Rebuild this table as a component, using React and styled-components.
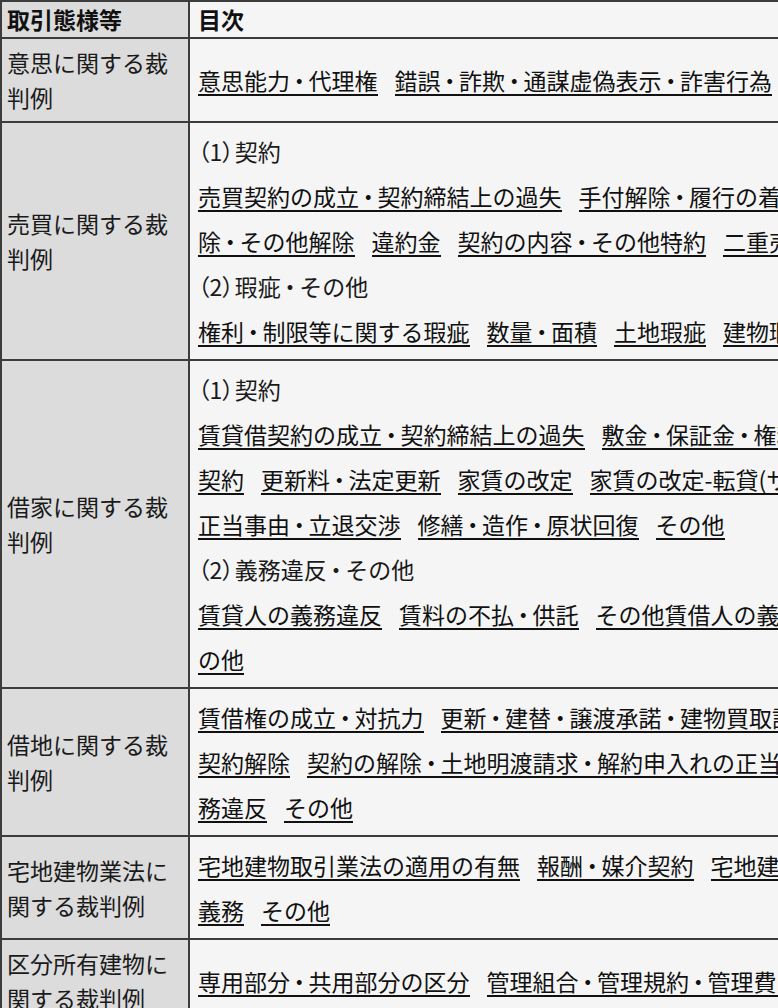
import React from "react";
import styled, { createGlobalStyle } from "styled-components";

const GlobalStyle = createGlobalStyle`
  html, body {
    margin: 0;
    padding: 0;
    overflow: hidden;
    background: #f5f5f5;
  }
  body {
    font-family: "Noto Sans CJK JP", "Noto Sans", sans-serif;
    color: #1a1a1a;
  }
`;

const ROWS = [
  {
    label: ["意思に関する裁", "判例"],
    lines: [{ links: ["意思能力・代理権", "錯誤・詐欺・通謀虚偽表示・詐害行為"] }],
  },
  {
    label: ["売買に関する裁", "判例"],
    lines: [
      { num: "（1）", heading: "契約" },
      { links: ["売買契約の成立・契約締結上の過失", "手付解除・履行の着手・債務不履行解"] },
      { links: ["除・その他解除", "違約金", "契約の内容・その他特約", "二重売買・他人物売買"] },
      { num: "（2）", heading: "瑕疵・その他" },
      { links: ["権利・制限等に関する瑕疵", "数量・面積", "土地瑕疵", "建物瑕疵", "その他"] },
    ],
  },
  {
    label: ["借家に関する裁", "判例"],
    lines: [
      { num: "（1）", heading: "契約" },
      { links: ["賃貸借契約の成立・契約締結上の過失", "敷金・保証金・権利金・定期借家"] },
      { links: ["契約", "更新料・法定更新", "家賃の改定", "家賃の改定-転貸(サブリース)", "解約申入れ"] },
      { links: ["正当事由・立退交渉", "修繕・造作・原状回復", "その他"] },
      { num: "（2）", heading: "義務違反・その他" },
      { links: ["賃貸人の義務違反", "賃料の不払・供託", "その他賃借人の義務違反・倒産・そ"] },
      { links: ["の他"] },
    ],
  },
  {
    label: ["借地に関する裁", "判例"],
    lines: [
      { links: ["賃借権の成立・対抗力", "更新・建替・譲渡承諾・建物買取請求権", "地代"] },
      { links: ["契約解除", "契約の解除・土地明渡請求・解約申入れの正当事由・賃借人の義"] },
      { links: ["務違反", "その他"] },
    ],
  },
  {
    label: ["宅地建物業法に", "関する裁判例"],
    lines: [
      { links: ["宅地建物取引業法の適用の有無", "報酬・媒介契約", "宅地建物取引業者の調査・説明"] },
      { links: ["義務", "その他"] },
    ],
  },
  {
    label: ["区分所有建物に", "関する裁判例"],
    lines: [{ links: ["専用部分・共用部分の区分", "管理組合・管理規約・管理費・修繕積立金", "その他"] }],
  },
];

// the middle dot in the original font is narrower than a full em
const withDots = (text) =>
  text.split("・").map((part, i) => (
    <React.Fragment key={i}>
      {i > 0 && <Dot>・</Dot>}
      {part}
    </React.Fragment>
  ));

const App = () => (
  <>
    <GlobalStyle />
    <Table>
      <colgroup>
        <LabelCol />
        <col />
      </colgroup>
      <thead>
        <tr>
          <HeadCell $side="label">取引態様等</HeadCell>
          <HeadCell>目次</HeadCell>
        </tr>
      </thead>
      <tbody>
        {ROWS.map((row, i) => (
          <tr key={i}>
            <LabelCell>
              {row.label.map((part, j) => (
                <React.Fragment key={j}>
                  {j > 0 && <br />}
                  {part}
                </React.Fragment>
              ))}
            </LabelCell>
            <BodyCell>
              {row.lines.map((line, j) =>
                line.heading ? (
                  <Line key={j}>
                    <Num>{line.num}</Num>
                    {withDots(line.heading)}
                  </Line>
                ) : (
                  <Line key={j}>
                    {line.links.map((text, k) => (
                      <TocLink key={k} href="#">
                        {withDots(text)}
                      </TocLink>
                    ))}
                  </Line>
                )
              )}
            </BodyCell>
          </tr>
        ))}
      </tbody>
    </Table>
  </>
);

const Table = styled.table`
  table-layout: fixed;
  width: 1500px;
  border-collapse: collapse;
  border: 2px solid #3c3c3c;
  font-size: 23px;
`;

const LabelCol = styled.col`
  width: 188px;
`;

const HeadCell = styled.th`
  border: 2px solid #3c3c3c;
  background: ${(p) => (p.$side === "label" ? "#dcdcdc" : "#f5f5f5")};
  text-align: left;
  font-weight: 700;
  line-height: 35px;
  padding: 0 8px 0 ${(p) => (p.$side === "label" ? "5px" : "8px")};
  color: #111;
  white-space: nowrap;
`;

const LabelCell = styled.td`
  border: 2px solid #3c3c3c;
  background: #dcdcdc;
  vertical-align: middle;
  line-height: 35px;
  padding: 6px 5px;
  white-space: nowrap;
  color: #1a1a1a;
`;

const BodyCell = styled.td`
  border: 2px solid #3c3c3c;
  background: #f5f5f5;
  vertical-align: middle;
  padding: 6px 8px 5px;
  white-space: nowrap;
`;

const Line = styled.div`
  line-height: 45px;
  height: 45px;
`;

const Num = styled.span`
  font-feature-settings: "palt";
  margin-right: 1px;
`;

const Dot = styled.span`
  font-feature-settings: "palt";
  padding: 0 3.5px;
`;

/* underline drawn as a background so it runs under the dots' padding too */
const TocLink = styled.a`
  color: #111;
  text-decoration: none;
  background: linear-gradient(#111, #111) left bottom 1px / 100% 2px no-repeat;
  margin-right: 17px;

  &:last-child {
    margin-right: 0;
  }
`;

export default App;
